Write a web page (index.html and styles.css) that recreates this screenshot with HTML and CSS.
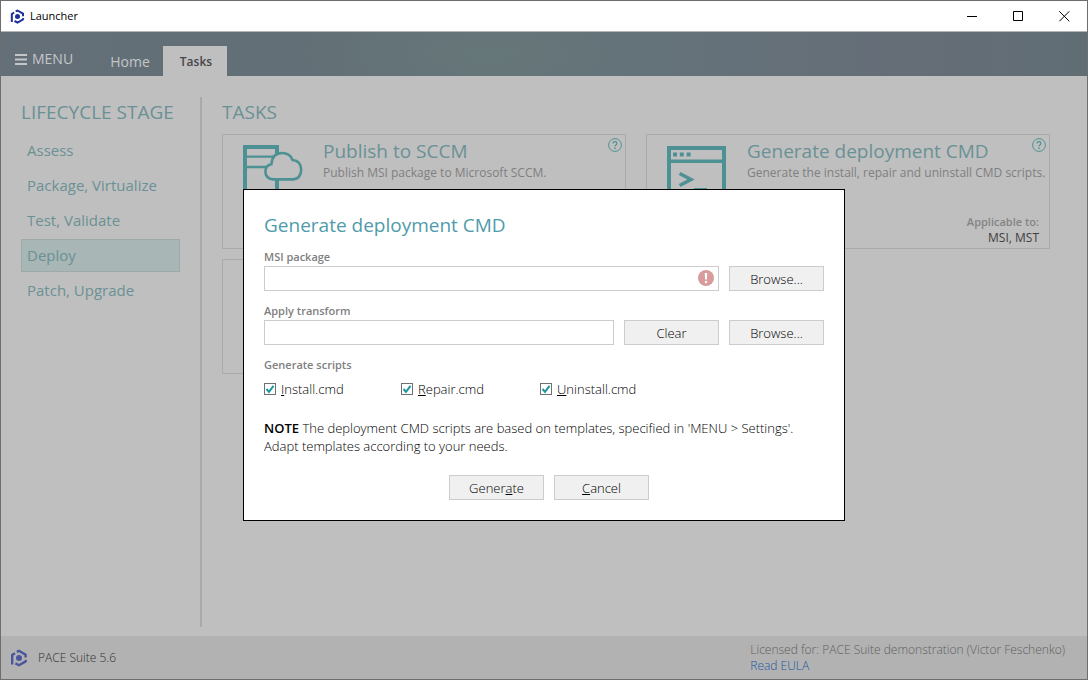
FILE: index.html
```html
<!DOCTYPE html>
<html lang="en">
<head>
<meta charset="utf-8">
<title>Launcher</title>
<link rel="stylesheet" href="styles.css">
</head>
<body>
<svg class="defs" aria-hidden="true">
  <symbol id="logo" viewBox="0 0 18 18">
    <g fill="none" stroke="currentColor" stroke-width="2.4">
      <path d="M2.2 15.6V6L5 4.2"/>
      <path d="M6.8 2.8L9 1.8L15.6 5.6V8.6"/>
      <path d="M16.2 11L15.4 12.6L9 16.2L5.4 14.4"/>
    </g>
    <circle cx="9" cy="9" r="3" fill="currentColor"/>
  </symbol>
  <symbol id="help" viewBox="0 0 14 14">
    <circle cx="7" cy="7" r="6.4" fill="none" stroke="currentColor"/>
    <path d="M5 5.4Q5.1 3.7 7 3.7Q8.9 3.7 8.9 5.3Q8.9 6.2 7.9 6.9Q7 7.5 7 8.5" fill="none" stroke="currentColor" stroke-width="1.2"/>
    <rect x="6.3" y="9.6" width="1.4" height="1.4" fill="currentColor"/>
  </symbol>
</svg>
<div class="window">
  <header class="titlebar">
    <svg class="titlebar-logo"><use href="#logo"/></svg>
    <span class="titlebar-name">Launcher</span>
    <button class="win-btn" aria-label="Minimize"><svg viewBox="0 0 11 11"><path d="M0 5.5H10"/></svg></button>
    <button class="win-btn" aria-label="Maximize"><svg viewBox="0 0 11 11"><path d="M.5 .5H9.5V9.5H.5Z"/></svg></button>
    <button class="win-btn" aria-label="Close"><svg viewBox="0 0 11 11"><path d="M.3 .3L10.3 10.3M10.3 .3L.3 10.3"/></svg></button>
  </header>
  <div class="client">
    <nav class="ribbon">
      <button class="menu"><svg viewBox="0 0 12 11"><path d="M0 1H12M0 5.5H12M0 10H12"/></svg>MENU</button>
      <button class="tab">Home</button>
      <button class="tab tab-active">Tasks</button>
    </nav>
    <div class="body">
      <aside class="stages">
        <h2 class="heading">LIFECYCLE STAGE</h2>
        <ul class="stage-list">
          <li><button class="stage">Assess</button></li>
          <li><button class="stage">Package, Virtualize</button></li>
          <li><button class="stage">Test, Validate</button></li>
          <li><button class="stage stage-active">Deploy</button></li>
          <li><button class="stage">Patch, Upgrade</button></li>
        </ul>
      </aside>
      <main class="tasks">
        <h2 class="heading">TASKS</h2>
        <div class="cards">
          <article class="card">
            <svg class="card-icon" viewBox="0 0 60 60" fill="none" stroke="currentColor">
              <path stroke-width="4" d="M2 60V2H34V60"/>
              <path stroke-width="2.4" d="M4 11.6H34M4 22H34"/>
              <path class="cloud" stroke-width="2.6" d="M30 34.4Q22.4 33.4 22.4 26.4Q22.4 20.4 28.4 19.2Q29.4 8 39 8Q47 8 49.6 15Q58 16 58.2 24.6Q58 33.6 50 34.4Z"/>
            </svg>
            <div class="card-text">
              <h3 class="card-title">Publish to SCCM</h3>
              <p class="card-desc">Publish MSI package to Microsoft SCCM.</p>
            </div>
            <svg class="help"><use href="#help"/></svg>
          </article>
          <article class="card">
            <svg class="card-icon" viewBox="0 0 60 60" fill="none" stroke="currentColor">
              <path stroke-width="4" d="M2 3H57V58H2Z"/>
              <path stroke-width="3.4" d="M2 16.3H57"/>
              <path stroke-width="4" stroke-dasharray="4 2.8" d="M6 9.5H23.6"/>
              <path stroke-width="3.4" d="M12.6 28.6L24 34.5L12.6 40.4"/>
              <path stroke-width="3" d="M27 44.5H40"/>
            </svg>
            <div class="card-text">
              <h3 class="card-title">Generate deployment CMD</h3>
              <p class="card-desc">Generate the install, repair and uninstall CMD scripts.</p>
              <p class="applies"><b>Applicable to:</b><span>MSI, MST</span></p>
            </div>
            <svg class="help"><use href="#help"/></svg>
          </article>
          <article class="card"></article>
        </div>
      </main>
    </div>
    <footer class="footer">
      <svg class="footer-logo"><use href="#logo"/></svg>
      <span class="version">PACE Suite 5.6</span>
      <div class="license">
        <span>Licensed for: PACE Suite demonstration (Victor Feschenko)</span>
        <a href="#eula">Read EULA</a>
      </div>
    </footer>
    <div class="backdrop">
      <form class="dialog" role="dialog" aria-labelledby="dialog-title">
        <h1 class="dialog-title" id="dialog-title">Generate deployment CMD</h1>
        <label class="label" for="msi">MSI package</label>
        <div class="row">
          <div class="field">
            <input class="input" id="msi" type="text">
            <svg class="error" viewBox="0 0 16 16"><circle cx="8" cy="8" r="8"/><path d="M6.8 3H9.2L8.9 9.5H7.1Z"/><circle class="dot" cx="8" cy="12" r="1.2"/></svg>
          </div>
          <button class="btn" type="button">Browse...</button>
        </div>
        <label class="label" for="mst">Apply transform</label>
        <div class="row">
          <div class="field"><input class="input" id="mst" type="text"></div>
          <button class="btn" type="button">Clear</button>
          <button class="btn" type="button">Browse...</button>
        </div>
        <span class="label">Generate scripts</span>
        <div class="checks">
          <label class="check"><input type="checkbox" checked><span><u>I</u>nstall.cmd</span></label>
          <label class="check"><input type="checkbox" checked><span><u>R</u>epair.cmd</span></label>
          <label class="check"><input type="checkbox" checked><span><u>U</u>ninstall.cmd</span></label>
        </div>
        <p class="note"><b>NOTE</b> The deployment CMD scripts are based on templates, specified in 'MENU &gt; Settings'.<br>Adapt templates according to your needs.</p>
        <div class="actions">
          <button class="btn" type="button"><span>Gener<u>a</u>te</span></button>
          <button class="btn" type="button"><span><u>C</u>ancel</span></button>
        </div>
      </form>
    </div>
  </div>
</div>
</body>
</html>
```
FILE: styles.css
```css
* { box-sizing: border-box; }
body {
  margin: 0;
  font: 12px/18px "Open Sans", "Noto Sans", sans-serif;
  color: #000;
}
h1, h2, h3, p, ul { margin: 0; padding: 0; font-weight: 400; }
ul { list-style: none; }
button, input { font: inherit; color: inherit; }
button { border: 0; background: none; padding: 0; }
.defs { position: absolute; width: 0; height: 0; }

.window {
  display: flex;
  flex-direction: column;
  min-height: 100vh;
  border: 1px solid #6e6e6e;
  background: #bfbfbf;
}
.titlebar {
  display: flex;
  align-items: center;
  height: 30px;
  padding-left: 9px;
  background: #fff;
}
.titlebar-logo { width: 15px; height: 15px; margin-right: 5px; color: #1c2f9c; }
.titlebar-name { flex: 1; font-size: 11px; }
.win-btn { width: 46px; height: 30px; display: grid; place-items: center; }
.win-btn svg { width: 11px; height: 11px; fill: none; stroke: #000; }

.client { position: relative; flex: 1; display: flex; flex-direction: column; }
.ribbon {
  display: flex;
  align-items: flex-end;
  height: 45px;
  border-top: 1px solid #b4b4b4;
  padding-left: 14px;
  background:
    radial-gradient(ellipse 200px 60px at 45% 50%, #667779, transparent),
    linear-gradient(90deg, #646f78, #626f76 30%, #64727a 60%, #656d77 85%, #606e74);
  color: #c4c6c8;
  font-size: 14px;
}
.menu { display: flex; align-items: center; gap: 5px; height: 34px; width: 80px; }
.menu svg { width: 12px; height: 11px; stroke: #c4c6c8; stroke-width: 2; }
.tab { width: 68px; height: 30px; padding: 2px 0 0 2px; }
.tab-active { width: 64px; background: #bfbfbf; color: #46464a; font-weight: 600; font-size: 12px; }

.body { flex: 1; display: flex; padding: 21px 0 9px 20px; }
.stages { width: 181px; border-right: 2px solid #a9a9a9; }
.heading { font-size: 19px; line-height: 30px; color: #6a9195; }
.stage-list { display: grid; gap: 2px; padding: 7px 20px 0 0; }
.stage {
  width: 100%;
  height: 33px;
  padding: 0 5px 2px;
  border: 1px solid transparent;
  text-align: left;
  font-size: 15px;
  color: #6a9195;
}
.stage-active { background: #a8b6b5; border-color: #9fa9a8; }

.tasks { flex: 1; padding: 0 37px 0 20px; }
.cards {
  display: grid;
  grid-template-columns: repeat(2, minmax(0, 1fr));
  gap: 10px 20px;
  padding-top: 7px;
}
.card {
  position: relative;
  display: flex;
  gap: 20px;
  min-height: 115px;
  padding: 5px 10px 0 20px;
  border: 1px solid #aaa;
}
.card-icon { flex: none; width: 60px; height: 60px; margin-top: 5px; color: #4d9194; }
.cloud { fill: #bfbfbf; }
.card-text { flex: 1; min-width: 0; display: flex; flex-direction: column; white-space: nowrap; }
.card-title { font-size: 19px; line-height: 22px; color: #6a9195; }
.card-desc { line-height: 22px; color: #808080; }
.applies { display: grid; margin-top: auto; padding-bottom: 2px; line-height: 16px; text-align: right; color: #404040; }
.applies b { font-weight: 600; font-size: 11px; color: #848484; }
.help { position: absolute; top: 3px; right: 3px; width: 14px; height: 14px; color: #4d9194; }

.footer {
  display: flex;
  align-items: center;
  height: 43px;
  padding: 0 22px 0 9px;
  background: #b2b2b2;
  color: #303030;
  font-weight: 300;
}
.footer-logo { width: 18px; height: 18px; margin-right: 10px; color: #4a569c; }
.version { flex: 1; }
.license { display: grid; line-height: 16px; color: #606060; }
.license a { color: #2058a0; text-decoration: none; }

.backdrop { position: absolute; inset: 0; display: grid; place-items: center; }
.dialog {
  width: 602px;
  padding: 23px 20px 20px;
  border: 1px solid #000;
  background: #fff;
}
.dialog-title { font-size: 19px; line-height: 24px; color: #509bab; margin-bottom: 11px; }
.label { display: block; line-height: 18px; font-weight: 600; color: #808080; font-size: 11px; }
.row { display: flex; gap: 10px; margin-bottom: 11px; }
.field { position: relative; flex: 1; display: flex; }
.input { flex: 1; min-width: 0; height: 25px; padding: 0 6px; border: 1px solid #ccc; background: #fff; }
.error { position: absolute; top: 4px; right: 5px; width: 16px; height: 16px; fill: #d99c9c; }
.error path, .error .dot { fill: #fff; }
.btn {
  width: 95px;
  height: 25px;
  border: 1px solid #ccc;
  background: #f0f0f0;
  font-size: 13px;
  font-weight: 300;
}
.checks { display: grid; grid-template-columns: 137px 139px 1fr; margin-top: 6px; font-size: 13px; font-weight: 300; }
.check { display: flex; align-items: center; gap: 5px; }
.check input {
  appearance: none;
  width: 12px;
  height: 12px;
  margin: 0;
  border: 1px solid #707070;
  background: #fff url("data:image/svg+xml,%3Csvg xmlns='http://www.w3.org/2000/svg' viewBox='0 0 10 10'%3E%3Cpath d='M1.5 5L4 7.8L8.5 1.8' fill='none' stroke='%231f969f' stroke-width='2'/%3E%3C/svg%3E");
}
.note { margin-top: 21px; font-size: 13px; font-weight: 300; line-height: 18px; }
.note b { font-weight: 600; }
.actions { display: flex; justify-content: center; gap: 10px; margin-top: 20px; padding-left: 10px; }
```
